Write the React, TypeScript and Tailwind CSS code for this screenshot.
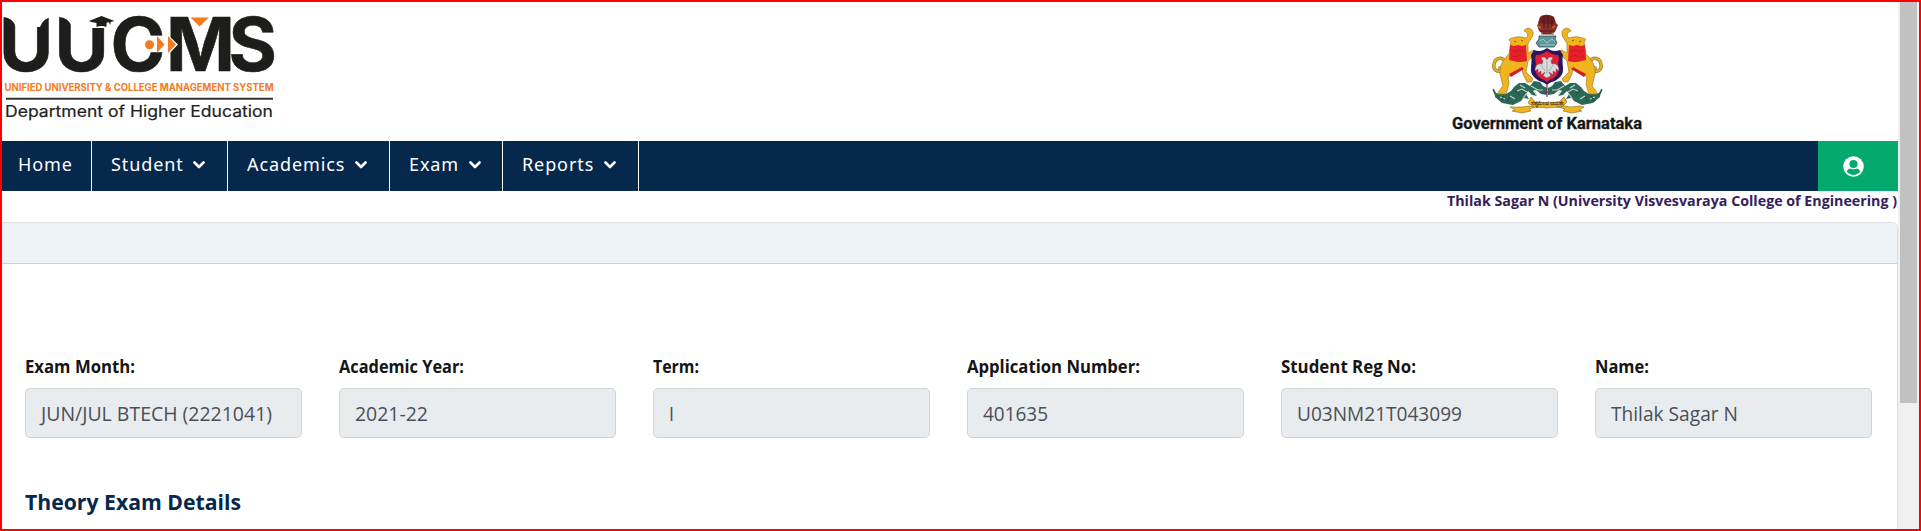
const menu = [
  { label: "Student", width: "w-[136px]" },
  { label: "Academics", width: "w-[162px]" },
  { label: "Exam", width: "w-[113px]" },
  { label: "Reports", width: "w-[136px]" },
];

const fields = [
  { label: "Exam Month:", value: "JUN/JUL BTECH (2221041)", lw: 110, vw: 231 },
  { label: "Academic Year:", value: "2021-22", lw: 125, vw: 73 },
  { label: "Term:", value: "I", lw: 46, vw: 5 },
  { label: "Application Number:", value: "401635", lw: 173, vw: 65 },
  { label: "Student Reg No:", value: "U03NM21T043099", lw: 135, vw: 165 },
  { label: "Name:", value: "Thilak Sagar N", lw: 54, vw: 127 },
];

function Logo() {
  return (
    <svg width="290" height="130" viewBox="0 0 290 130" className="block shrink-0">
      <text x="-1 54.500 110.500 166 228.500" y="71" fontFamily="Inter, sans-serif" fontSize="74" fontWeight="700" fill="#1d1d1b" stroke="#1d1d1b" strokeWidth=".6">UUCMS</text>
      <path d="M3 15v2q9 0 13 10h4V15zM53 15v2q-9 0-13 10h-4V15zM59 15v2q9 0 13 10h4V15z" fill="#fff" />
      <path d="M91 14h20v14H91z" fill="#fff" />
      <path d="M89 21 101.500 16l13 5-4 1v3l-2-3-2 1v4q-5-2-10 0v-4l-5-1z" fill="#1d1d1b" />
      <path d="M187 14h25l-12.500 14z" fill="#fff" />
      <path d="M190.500 17.500h18.500l-9.500 9z" fill="#f47b20" />
      <path d="m167 34 11 10.500-11 11.500z" fill="#fff" />
      <circle cx="149.500" cy="44.700" r="4.500" fill="#f47b20" />
      <path d="m157 36 7.500 8.500L157 53zM168 36l8 8.500-8 8.500z" fill="#f47b20" />
      <text x="4.500" y="90.600" fontFamily="Inter, sans-serif" fontSize="10.100" fontWeight="700" fill="#f47b20" textLength="269" lengthAdjust="spacingAndGlyphs">UNIFIED UNIVERSITY &amp; COLLEGE MANAGEMENT SYSTEM</text>
      <path d="M6 98.700h267" stroke="#333" strokeWidth="2" />
      <text x="5" y="117" fontFamily="Inter, sans-serif" fontSize="16.300" fill="#222" stroke="#222" strokeWidth=".2" textLength="268" lengthAdjust="spacingAndGlyphs">Department of Higher Education</text>
    </svg>
  );
}

function Lion() {
  return (
    <g>
      <path d="M61 71c-5 1-8-2-7-7 1-6 7-7 10-4 4 5-1 7-4 8 0 5 3 7 6 5" fill="none" stroke="#8f742c" strokeWidth="3.400" />
      <path d="M61 71c-5 1-8-2-7-7 1-6 7-7 10-4 4 5-1 7-4 8 0 5 3 7 6 5" fill="none" stroke="#e2ad20" strokeWidth="2.300" />
      <path d="M71 42c-3-2-2-4 2-4 5-2 9-1 13 0 3-2 2-6-2-7 2-5 10-3 9 3 0 4-4 6-5 10v9l6-3 2 3-8 8-2 11 7 7-2 3h-4l-4-8-1-6-7 4-7 5 1 7-3 10h-8l1-3 4-5-3-12c-1-9 4-15 9-20z" fill="#f0b51e" stroke="#a07b2b" strokeWidth=".7" />
      <path d="m70 45 4 1 4-1 4 1 4-1 1 16c-5 2-11 1-18-1z" fill="#e52029" />
      <path d="m71 50 4 2 5-2 5 2M71 56l5 1 4-2 5 2" fill="none" stroke="#b91825" strokeWidth=".6" />
      <path d="m69 74 13-7 2 2-13 8z" fill="#ce2027" />
      <path d="m74 41 2 1M81 40l2 1" stroke="#705316" />
    </g>
  );
}

function Foliage() {
  return (
    <g>
      <path d="m54 89 2 4 5 1 3-2 2 2 5-3 3-4 5-4 6 0 5 3 4-5 6 1 3 4 4 2v7l-6-1-5-4-3 1 4 5-5-1-4-4-2 3 3 5-5-1-3 3-8 4-11-2-7-6z" fill="#2b6855" />
      <path d="m77 91 5-2 5 3M91 86l7 4 5 0M70 96l5 3M60 97l5 2M86 94l-4 6M94 90l3 6M80 85l5 3" fill="none" stroke="#c4d5ce" strokeWidth="1.100" />
      <path d="m55 94-2-5M61 101l3-5M67 102l3-5M75 90l4 5" stroke="#244d42" strokeWidth="1.200" />
    </g>
  );
}

function Emblem() {
  return (
    <svg width="220" height="138" viewBox="0 0 220 138" className="block shrink-0">
      <Foliage />
      <g transform="translate(215 0) scale(-1 1)"><Foliage /></g>
      <Lion />
      <g transform="translate(215 0) scale(-1 1)"><Lion /></g>
      <path d="M99 36h17l-1 3 2 4-3 4H99l-3-4 3-4z" fill="#5c979b" stroke="#354c51" strokeWidth=".8" />
      <path d="m100 41 3-2 4 4 5-4 3 3M100 45h15" fill="none" stroke="#a1c6c8" />
      <path d="M100 17c3-3 10-3 14 0l2 6-2 7h-14l-2-7z" fill="#731f20" />
      <path d="M97 25q4-4 7 0 3-3 7 0 4-4 7 0l-3 7-4 2h-8l-4-3z" fill="#8b2f29" />
      <path d="M104 16v12m4-12v12m4-10v10M100 31h14M101 34h13" stroke="#431819" strokeWidth=".8" />
      <path d="m98 26 3 2m14-2-3 2" stroke="#c9772c" strokeWidth="1.500" />
      <path d="M94 50c5 2 9 1 13-2 4 3 8 4 13 2l3 5c-2 10 3 16-3 22-4 5-9 4-13 8-4-4-9-3-13-8-6-6-1-12-3-22z" fill="#2a165e" />
      <path d="M96 55c5 0 8-2 11-4 4 2 6 4 11 4l1 3c-2 7 1 12-2 17-3 4-7 4-10 7-3-3-7-3-10-7-3-5 0-10-2-17z" fill="#e01e35" />
      <path d="M107 60c-1-3-4-4-6-2l2 3-1 3c-4-1-7 1-7 7l3-2v4l3-2v4l4-3-2 4 4 2 4-2-2-4 4 3v-4l3 2v-4l3 2c0-6-3-8-7-7l-1-3 2-3c-2-2-5-1-6 2z" fill="#d8d9d9" stroke="#7c4852" strokeWidth=".5" />
      <path d="M107 61v13m-6-9 4 6m8-6-4 6" stroke="#969c9e" strokeWidth=".7" />
      <path d="M107 85v12m-3-5h6" stroke="#7c315c" strokeWidth="1.200" />
      <path d="m91 97 4 5 12 1 12-1 5-5 3 5-4 4-7 1h4l5-1 5 1 10-1 4 1-5 3 3 1-10 2-9-2 2-2-7-2-11 1-11-1-7 2 2 2-9 2-10-2 3-1-5-3 12 0 7-1 5 1-6-4z" fill="#edb51e" stroke="#8b6b20" strokeWidth=".6" />
      <text x="91" y="104.500" fontSize="6" fontWeight="700" fill="#604514" fontFamily="Noto Sans, sans-serif" textLength="33">ಸತ್ಯಮೇವ ಜಯತೇ</text>
      <text x="12" y="129.300" fontFamily="Roboto, sans-serif" fontSize="16.500" fontWeight="700" fill="#171717" stroke="#171717" strokeWidth=".3" textLength="190" lengthAdjust="spacingAndGlyphs">Government of Karnataka</text>
    </svg>
  );
}

function Label({ text, width, size, baseline, height, className }: { text: string; width: number; size: number; baseline: number; height: number; className: string }) {
  return (
    <svg width={width + 2} height={height} className={"block overflow-visible font-['Open_Sans',sans-serif] " + className}>
      <text x="0" y={baseline} fontSize={size} textLength={width} lengthAdjust="spacingAndGlyphs" fill="currentColor">{text}</text>
    </svg>
  );
}

function Chevron() {
  return (
    <svg width="12" height="8" viewBox="0 0 12 8" className="mt-px ml-[9.5px]">
      <path d="m1.500 1.500 4.500 4.500 4.500-4.500" fill="none" stroke="white" strokeWidth="2.600" strokeLinecap="round" strokeLinejoin="round" />
    </svg>
  );
}

export default function App() {
  return (
    <div className="flex h-[531px] w-[1921px] overflow-hidden border-2 border-[#ff0000] bg-white font-['Noto_Sans',sans-serif]">
      <main className="flex w-[1896px] shrink-0 flex-col">
        <header className="flex h-[139px] shrink-0 justify-between overflow-hidden pr-[238px]">
          <div className="-mt-0.5 -ml-0.5"><Logo /></div>
          <div className="-mt-0.5"><Emblem /></div>
        </header>
        <nav className="flex h-[50px] shrink-0 bg-[#06284c] text-[18px] leading-[46px] tracking-[0.9px] text-white">
          <a className="w-[90px] border-r border-white pl-4">Home</a>
          {menu.map((item) => (
            <a key={item.label} className={"flex items-center border-r border-white pb-1 pl-[19px] " + item.width}>
              <span>{item.label}</span><Chevron />
            </a>
          ))}
          <button className="ml-auto flex w-20 items-center justify-center bg-[#04aa6d] pr-[9px] pt-px">
            <svg width="21" height="21" viewBox="0 0 21 21">
              <circle cx="10.500" cy="10.500" r="10.300" fill="white" />
              <path d="M3.700 15.500c.8-2 2.100-3 4.100-3h5.400c2 0 3.300 1 4.100 3a8.300 8.300 0 0 1-13.600 0z" fill="#04aa6d" />
              <circle cx="10.500" cy="8" r="5.300" fill="white" />
              <circle cx="10.500" cy="8" r="4.100" fill="#04aa6d" />
            </svg>
          </button>
        </nav>
        <div className="flex h-[31px] shrink-0 justify-end font-bold text-[#36205b]">
          <Label text="Thilak Sagar N (University Visvesvaraya College of Engineering )" width={450} size={14.4} baseline={15} height={31} className="-mr-px" />
        </div>
        <section className="flex grow flex-col rounded-tr-md border-t border-r border-[#dfdfdf]">
          <div className="h-[41px] shrink-0 rounded-tr-md border-b border-[#ced2d6] bg-[#eef3f7]" />
          <div className="mt-[88px] flex gap-[37px] pl-[23px]">
            {fields.map((field) => (
              <div key={field.label} className="w-[277px] shrink-0">
                <Label text={field.label} width={field.lw} size={17.4} baseline={21} height={36} className="font-bold text-[#151515]" />
                <div className="h-[50px] rounded-[5px] border border-[#ced4da] bg-[#e9ecef] pl-[15px]">
                  <Label text={field.value} width={field.vw} size={19.6} baseline={32} height={48} className="text-[#495057]" />
                </div>
              </div>
            ))}
          </div>
          <h2 className="mt-12 pl-[23px] font-bold text-[#06284c]">
            <Label text="Theory Exam Details" width={216} size={21.5} baseline={24} height={36} className="" />
          </h2>
        </section>
      </main>
      <aside className="h-full grow bg-[#f0f0f0] px-[2px]">
        <div className="h-[401px] w-[17px] bg-[#c1c1c1]" />
      </aside>
    </div>
  );
}
